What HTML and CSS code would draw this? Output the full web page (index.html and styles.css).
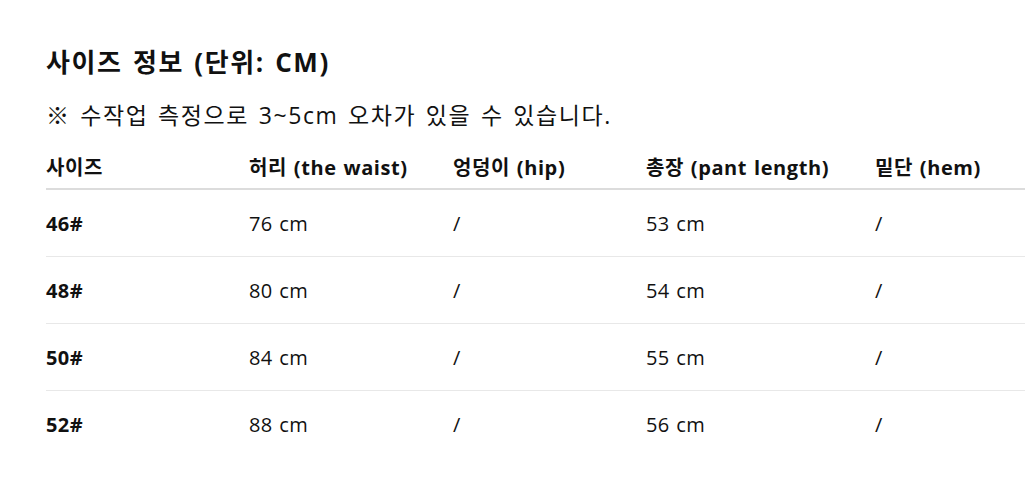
FILE: index.html
```html
<!DOCTYPE html>
<html lang="ko">
<head>
<meta charset="utf-8">
<link rel="stylesheet" href="styles.css">
</head>
<body>
<div class="page">
  <h2 class="title">사이즈 정보 (단위: CM)</h2>
  <p class="note">※ 수작업 측정으로 3~5cm 오차가 있을 수 있습니다.</p>
  <div class="table">
    <div class="row head">
      <div class="cell">사이즈</div>
      <div class="cell">허리 (the waist)</div>
      <div class="cell">엉덩이 (hip)</div>
      <div class="cell">총장 (pant length)</div>
      <div class="cell">밑단 (hem)</div>
    </div>
    <div class="row">
      <div class="cell size">46#</div>
      <div class="cell">76 cm</div>
      <div class="cell">/</div>
      <div class="cell">53 cm</div>
      <div class="cell">/</div>
    </div>
    <div class="row">
      <div class="cell size">48#</div>
      <div class="cell">80 cm</div>
      <div class="cell">/</div>
      <div class="cell">54 cm</div>
      <div class="cell">/</div>
    </div>
    <div class="row">
      <div class="cell size">50#</div>
      <div class="cell">84 cm</div>
      <div class="cell">/</div>
      <div class="cell">55 cm</div>
      <div class="cell">/</div>
    </div>
    <div class="row last">
      <div class="cell size">52#</div>
      <div class="cell">88 cm</div>
      <div class="cell">/</div>
      <div class="cell">56 cm</div>
      <div class="cell">/</div>
    </div>
  </div>
</div>
</body>
</html>
```

FILE: styles.css
```css
html, body {
  margin: 0;
  padding: 0;
  background: #ffffff;
}
body {
  font-family: "Open Sans", "Noto Sans CJK KR", sans-serif;
  color: #111111;
  overflow: hidden;
}
.page {
  padding: 40px 0 0 46px;
}
.title {
  margin: 0;
  font-size: 26px;
  font-weight: 700;
  line-height: 44px;
  letter-spacing: 1.6px;
  word-spacing: 2px;
}
.note {
  margin: 13px 0 0 0;
  font-size: 23px;
  line-height: 36px;
  letter-spacing: 1.6px;
  word-spacing: 2px;
}
.table {
  margin-top: 12px;
}
.row {
  display: grid;
  grid-template-columns: 203px 204px 193px 229px 1fr;
  height: 66px;
  align-items: center;
  border-bottom: 1px solid #e8e8e8;
  font-size: 20px;
  letter-spacing: 0.4px;
  word-spacing: 1px;
}
.row.head {
  height: 43px;
  font-weight: 700;
  font-size: 20px;
  letter-spacing: 0.6px;
  border-bottom: 2px solid #dcdcdc;
}
.row.last {
  border-bottom: none;
}
.size {
  font-weight: 700;
}
```
